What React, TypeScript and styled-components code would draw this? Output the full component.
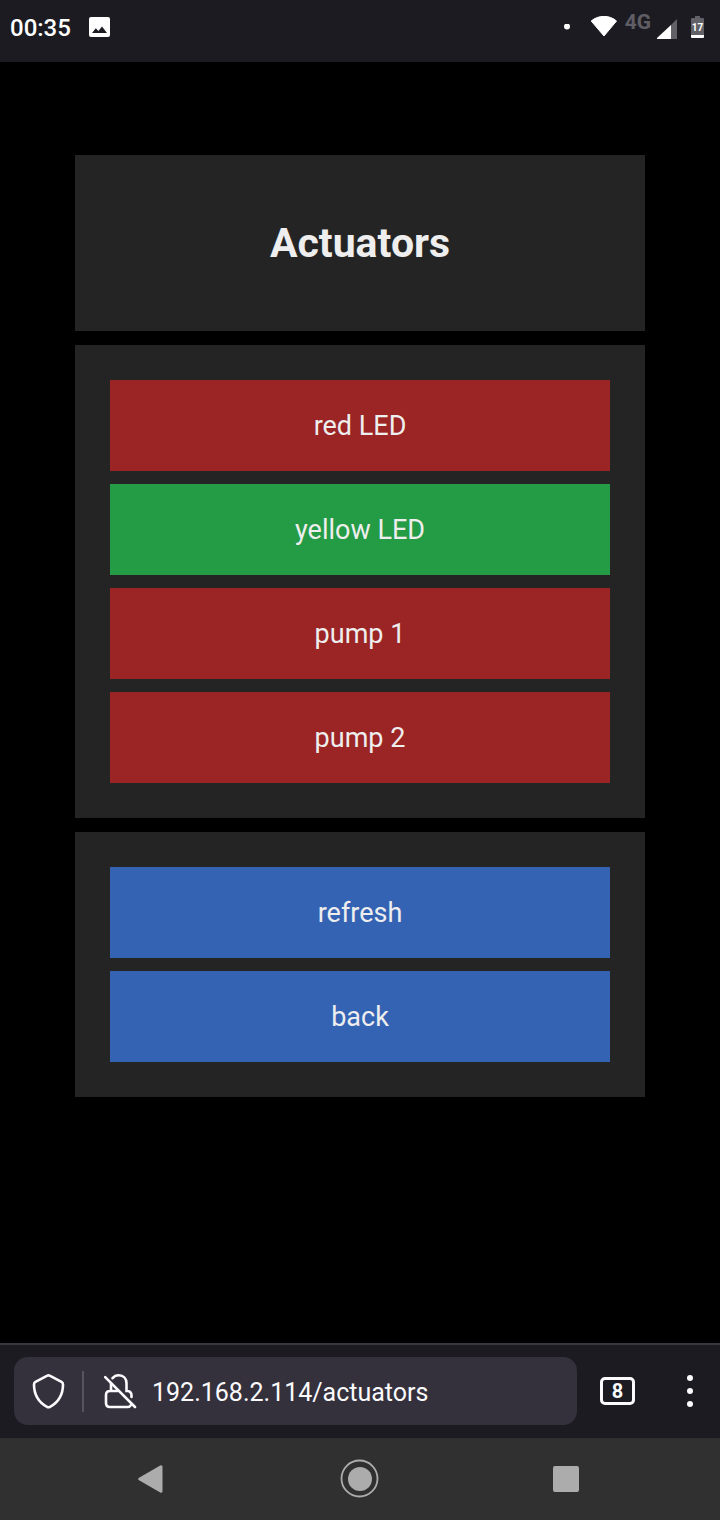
import React, { useState } from "react";
import styled, { createGlobalStyle } from "styled-components";

const GlobalStyle = createGlobalStyle`
  *, *::before, *::after { box-sizing: border-box; }
  body {
    margin: 0;
    background: #000;
    color: #eee;
    font-family: Roboto, "Liberation Sans", sans-serif;
  }
  button { font-family: inherit; color: inherit; border: 0; padding: 0; background: none; cursor: pointer; }
  svg { display: block; flex: none; }
`;

const Screen = styled.div`
  display: flex;
  flex-direction: column;
  min-height: 100vh;
`;

const StatusBar = styled.header`
  display: flex;
  align-items: center;
  justify-content: space-between;
  height: 62px;
  padding: 0 16px 8px 10px;
  background: #1c1b22;
  color: #fff;
`;

const StatusGroup = styled.div`
  display: flex;
  align-items: center;
`;

const Clock = styled.time`
  margin-right: 18px;
  padding-top: 2px;
  font-size: 24px;
  font-weight: 500;
  line-height: 30px;
`;

const Network = styled.span`
  margin: 0 6px 10px 7px;
  color: #5f5e64;
  font-size: 21px;
  font-weight: 700;
  line-height: 20px;
`;

const WifiIcon = styled.svg`
  margin-left: 20px;
`;

const BatteryIcon = styled.svg`
  margin-left: 14px;
`;

const Content = styled.main`
  display: flex;
  flex: 1;
  flex-direction: column;
  gap: 14px;
  padding: 93px 75px 40px;
`;

const Panel = styled.section`
  display: flex;
  flex-direction: column;
  gap: 13px;
  padding: 35px;
  background: #242424;
`;

const TitlePanel = styled(Panel)`
  padding: 64px 35px;
`;

const Title = styled.h1`
  margin: 0;
  font-size: 41px;
  font-weight: 700;
  line-height: 48px;
  text-align: center;
`;

const tones = { off: "#9b2425", on: "#249b45", action: "#3563b4" };

const PanelButton = styled.button<{ $tone: keyof typeof tones }>`
  height: 91px;
  background: ${({ $tone }) => tones[$tone]};
  font-size: 27px;
  line-height: 32px;
`;

const Toolbar = styled.div`
  display: flex;
  align-items: center;
  padding: 12px 19px 13px 14px;
  border-top: 2px solid #38373d;
  background: #1c1b22;
  color: #fbfbfe;
`;

const AddressBar = styled.form`
  display: flex;
  flex: 1;
  align-items: center;
  min-width: 0;
  height: 68px;
  padding: 0 18px;
  border-radius: 14px;
  background: #34313c;
`;

const Divider = styled.span`
  width: 2px;
  height: 41px;
  margin: 0 20px 0 17px;
  background: #56545f;
`;

const AddressInput = styled.input`
  flex: 1;
  min-width: 0;
  margin-left: 15px;
  padding: 4px 0 0;
  border: 0;
  outline: 0;
  background: none;
  color: #fbfbfe;
  font: 400 25px/32px Roboto, "Liberation Sans", sans-serif;
`;

const TabsButton = styled.button`
  width: 35px;
  height: 28px;
  margin: 0 46px 0 23px;
  border: 3px solid #fbfbfe;
  border-radius: 5px;
  font-size: 20px;
  font-weight: 700;
  line-height: 20px;
`;

const NavBar = styled.nav`
  display: grid;
  grid-template-columns: repeat(3, 1fr);
  height: 82px;
  padding: 0 51px;
  background: #303030;
`;

const NavButton = styled.button`
  display: flex;
  align-items: center;
  justify-content: center;
`;

export default function App() {
  const [actuators, setActuators] = useState([
    { name: "red LED", on: false },
    { name: "yellow LED", on: true },
    { name: "pump 1", on: false },
    { name: "pump 2", on: false },
  ]);
  const toggle = (name: string) =>
    setActuators((list) => list.map((a) => (a.name === name ? { ...a, on: !a.on } : a)));

  return (
    <Screen>
      <GlobalStyle />
      <StatusBar>
        <StatusGroup>
          <Clock>00:35</Clock>
          <svg width="21" height="21" viewBox="0 0 21 21" aria-hidden="true">
            <rect width="21" height="20" rx="2" fill="#fff" />
            <path d="M3 16L6.800 11.200L9.400 14L13 9.500L18 16Z" fill="#1c1b22" />
          </svg>
        </StatusGroup>
        <StatusGroup>
          <svg width="6" height="6" viewBox="0 0 6 6" aria-hidden="true">
            <circle cx="3" cy="2.500" r="3" fill="#fff" />
          </svg>
          <WifiIcon width="28" height="22" viewBox="0 0 28 22" aria-hidden="true">
            <path d="M1.200 5C8.500-1.200 19.500-1.200 26.500 5L14 20Z" fill="#fff" stroke="#fff" strokeLinejoin="round" />
          </WifiIcon>
          <Network>4G</Network>
          <svg width="20" height="24" viewBox="0 0 20 24" aria-hidden="true">
            <path d="M20 4V24H14V10Z" fill="#626167" />
            <path d="M14 10V24H0V23Z" fill="#fff" />
          </svg>
          <BatteryIcon width="13" height="22" viewBox="0 0 13 22" role="img" aria-label="Battery">
            <path d="M4 0H9V2H12Q13 2 13 3V19H0V3Q0 2 1 2H4Z" fill="#626167" />
            <path d="M0 19H13V21Q13 22 12 22H1Q0 22 0 21Z" fill="#fff" />
            <text x="6.500" y="15" fill="#fff" fontSize="10" fontWeight="700" textAnchor="middle">17</text>
          </BatteryIcon>
        </StatusGroup>
      </StatusBar>

      <Content>
        <TitlePanel>
          <Title>Actuators</Title>
        </TitlePanel>
        <Panel>
          {actuators.map(({ name, on }) => (
            <PanelButton key={name} type="button" $tone={on ? "on" : "off"} aria-pressed={on} onClick={() => toggle(name)}>
              {name}
            </PanelButton>
          ))}
        </Panel>
        <Panel>
          <PanelButton type="button" $tone="action">refresh</PanelButton>
          <PanelButton type="button" $tone="action">back</PanelButton>
        </Panel>
      </Content>

      <Toolbar>
        <AddressBar onSubmit={(e) => e.preventDefault()}>
          <svg width="33" height="36" viewBox="0 0 33 36" fill="none" stroke="#fbfbfe" strokeWidth="2.600" strokeLinejoin="round" aria-hidden="true">
            <path d="M15.300 2.700Q16.500 2 17.700 2.700L29.500 8.900Q31 9.700 31 11.400C31 21 27.500 28.500 18 33.800Q16.500 34.600 15 33.800C5.500 28.500 2 21 2 11.400Q2 9.700 3.500 8.900Z" />
          </svg>
          <Divider />
          <svg width="33" height="36" viewBox="0 0 33 36" fill="none" stroke="#fbfbfe" strokeWidth="2.600" strokeLinecap="round" aria-hidden="true">
            <path d="M1.200 4.200L31 34" />
            <path d="M8.500 5.200C10.200 3.200 12.300 2.300 14.800 2.300C19.600 2.300 22.500 5.700 22.500 10.300V18H23.500Q27.500 18.300 27.500 22.500V24" />
            <path d="M7 10.500V18M13.500 18H6Q2 18 2 22V30Q2 34 6 34H23.500Q26 34 27 32" />
          </svg>
          <AddressInput aria-label="Address" defaultValue="192.168.2.114/actuators" spellCheck={false} />
        </AddressBar>
        <TabsButton type="button" aria-label="8 open tabs">8</TabsButton>
        <button type="button" aria-label="Menu">
          <svg width="20" height="32" viewBox="0 0 20 32" fill="#fbfbfe" aria-hidden="true">
            <circle cx="9" cy="3" r="3" />
            <circle cx="9" cy="16" r="3" />
            <circle cx="9" cy="29" r="3" />
          </svg>
        </button>
      </Toolbar>

      <NavBar aria-label="System">
        <NavButton type="button" aria-label="Back">
          <svg width="32" height="28" viewBox="0 0 32 28" fill="#acacac" stroke="#acacac" strokeWidth="3" strokeLinejoin="round" aria-hidden="true">
            <path d="M1.800 14L23 1.800V26.200Z" />
          </svg>
        </NavButton>
        <NavButton type="button" aria-label="Home">
          <svg width="40" height="40" viewBox="0 0 40 40" aria-hidden="true">
            <circle cx="19.500" cy="19.500" r="18" fill="none" stroke="#acacac" strokeWidth="1.800" />
            <circle cx="20" cy="20" r="12" fill="#acacac" />
          </svg>
        </NavButton>
        <NavButton type="button" aria-label="Recent apps">
          <svg width="26" height="26" viewBox="0 0 26 26" aria-hidden="true">
            <rect width="26" height="26" rx="2" fill="#acacac" />
          </svg>
        </NavButton>
      </NavBar>
    </Screen>
  );
}
